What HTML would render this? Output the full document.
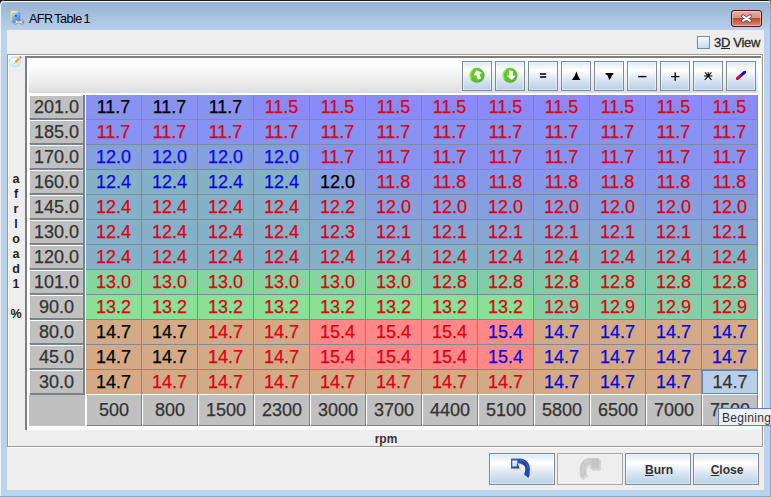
<!DOCTYPE html>
<html><head><meta charset="utf-8"><title>AFR Table 1</title>
<style>
*{box-sizing:border-box;margin:0;padding:0}
html,body{width:771px;height:497px;overflow:hidden}
body{background:#3ccbf0;position:relative;font-family:"Liberation Sans",Arial,sans-serif;color:#333}
div,span,svg{position:absolute}
#blk{left:0;top:0;width:771px;height:4px;background:linear-gradient(90deg,#1a1a1a 0,#1a1a1a 767px,#6a6a20 768px,#8a8a28 771px);border-bottom-right-radius:1px}
#win{left:0;top:0;width:770px;height:496px;background:#bbd2ec;border-radius:5px 3px 0 0;overflow:hidden}
#tb{left:0;top:0;width:770px;height:30px;background:linear-gradient(#9ab4d6 0px,#9db7d8 8px,#b9d0ea 30px)}
#tline{left:0;top:0;width:770px;height:1px;background:#1a1a1a}
#hl{left:0;top:1px;width:770px;height:495px;border-top:1px solid #fbfdff;border-left:1px solid #eef3fa;border-radius:5px 3px 0 0}
#title{left:29px;top:11px;font-size:12.6px;line-height:16px;color:#000;white-space:nowrap;letter-spacing:-.55px;word-spacing:-1px}
#content{left:7px;top:30px;width:757px;height:460px;background:#eee}
#close{left:731px;top:10px;width:31px;height:17px;border:1px solid #471520;border-radius:3px;background:linear-gradient(#e9b0a6 0,#dc8b7a 48%,#bf4a2c 50%,#d88872 100%);box-shadow:inset 0 0 0 1px rgba(255,220,210,.55)}
#cb{left:697px;top:36px;width:13px;height:13px;border:1px solid #7a8a99;background:linear-gradient(170deg,#fbfcfe 0,#e4ecf6 45%,#c6d6ea 100%)}
#cbl{left:714px;top:35px;font-size:13px;line-height:16px;color:#2a2a2a;white-space:nowrap;letter-spacing:-.3px;-webkit-text-stroke:.3px currentColor}
#panel{left:7px;top:54px;width:756px;height:393px;border:1px solid #9a9a9a;box-shadow:inset 1px 1px 0 #fff,1px 1px 0 #fff}
#cont{left:25px;top:56px;width:736px;height:374px;background:#fff;border-left:2px solid #7f7f7f;border-top:2px solid #7f7f7f}
#tool{left:29px;top:59px;width:729px;height:34px;background:linear-gradient(#fff 0,#fcfcfc 22%,#ededed 65%,#dedede 97%,#d8d8d8 100%)}
.tbtn{top:61px;width:30px;height:30px;border:1px solid #7a8a99;background:linear-gradient(#dde8f3 0,#fff 30%,#dde8f3 60%,#b8cfe5 100%);box-shadow:inset 0 0 0 1px rgba(255,255,255,.45)}
.tbtn svg{left:0;top:0}
.rh{left:29px;width:55px;height:24px;background:#c0c0c0;border-top:1px solid #fff;border-left:1px solid #fff;border-bottom:1px solid #808080;border-right:1px solid #808080;box-shadow:1px 1px 0 #76869a;font-size:18px;line-height:22px;text-align:center;color:#333}
.ch{top:394px;width:56px;height:32px;background:#c0c0c0;border-top:1px solid #fff;border-left:1px solid #fff;border-bottom:1px solid #808080;border-right:1px solid #808080;font-size:18px;line-height:30px;text-align:center;color:#333}
#rv{left:83px;top:95px;width:2px;height:300px;background:linear-gradient(90deg,#808080 0,#808080 1px,#76869a 1px,#76869a 2px)}
#corner{left:29px;top:395px;width:56px;height:31px;background:#c0c0c0}
.c{width:56px;height:25px;border-right:1px solid #7c8a9c;border-bottom:1px solid #7c8a9c;font-size:18px;line-height:25px;text-align:center}
.c,.rh,.ch{-webkit-text-stroke:.25px currentColor}
.k{color:#000}.r{color:#dc0012}.b{color:#0808dc}
.s{color:#333;background:#b8cfe5 !important;border:1px solid #6382bf;height:24px;line-height:22px}
#yl{left:9px;top:172px;width:14px;font-size:12.5px;font-weight:bold;line-height:15px;text-align:center;color:#222}
#yl span{position:static;display:block}
#xl{left:29px;top:432px;width:714px;text-align:center;font-size:12px;font-weight:bold;line-height:14px;color:#333}
.bbtn{top:453px;width:66px;height:32px;border:1px solid #7a8a99;box-shadow:inset 0 0 0 1px rgba(255,255,255,.45);background:linear-gradient(#dde8f3 0,#fff 30%,#dde8f3 60%,#b8cfe5 100%);font-size:12px;font-weight:bold;line-height:32px;padding-left:2px;text-align:center;color:#333}
.bbtn u{text-decoration:underline}
.dis{background:#eee;border-color:#a8a8a8;box-shadow:none}
#tip{left:718px;top:408px;width:60px;height:18px;border:1px solid #5f7fc0;background:#eff1f5;font-size:12px;line-height:18px;padding-left:3px;color:#333;white-space:nowrap;letter-spacing:.3px}
</style></head><body>
<div id="blk"></div>
<div id="win">
<div id="tb"></div><div id="tline"></div><div id="hl"></div>
<svg id="ticon" style="left:9px;top:9px" width="17" height="17" viewBox="0 0 17 17">
<defs><linearGradient id="ib" x1="0" y1="0" x2="1" y2="1"><stop offset="0" stop-color="#c4dcf8"/><stop offset=".5" stop-color="#6aa6ec"/><stop offset="1" stop-color="#3178dc"/></linearGradient>
<linearGradient id="iy" x1="0" y1="0" x2="1" y2="0"><stop offset="0" stop-color="#e6c25e"/><stop offset=".35" stop-color="#faedc0"/><stop offset="1" stop-color="#f0d890"/></linearGradient></defs>
<rect x="1" y="1.8" width="8" height="10.2" fill="url(#iy)"/>
<rect x="2.6" y="3.6" width="8.8" height="10.2" rx=".8" fill="url(#ib)"/>
<rect x="6" y="6" width="1.9" height="1.9" fill="#1e63c4"/>
<path d="M7.5 13h4.6" stroke="#808080" stroke-width="2.4"/>
<path d="M4.5 12.3A2.15 2.15 0 1 1 4.5 13.7L6.3 13.7L6.3 12.3Z" fill="#e2e2e2" stroke="#7a7a7a" stroke-width=".7"/>
<path d="M15.1 12.3A2.15 2.15 0 1 0 15.1 13.7L13.3 13.7L13.3 12.3Z" fill="#e2e2e2" stroke="#7a7a7a" stroke-width=".7"/>
<path d="M7.6 13h4.4" stroke="#e4e4e4" stroke-width="1.3"/>
</svg>
<div id="title">AFR Table 1</div>
<div id="close"><svg style="left:8px;top:2px" width="13" height="11" viewBox="0 0 13 11"><path d="M3.1 3.3l6.8 4.4M9.9 3.3l-6.8 4.4" stroke="#4a4a60" stroke-width="3.7" stroke-linecap="round"/><path d="M3.2 3.4l6.6 4.2M9.8 3.4l-6.6 4.2" stroke="#fff" stroke-width="2.3" stroke-linecap="round"/></svg></div>
<div id="content"></div>
<div id="cb"></div><div id="cbl">3<u>D</u> View</div>
<div id="panel"></div>
<svg id="bubble" style="left:8px;top:55px" width="16" height="14" viewBox="0 0 16 14">
<defs><radialGradient id="bg1" cx=".4" cy=".35" r=".7"><stop offset="0" stop-color="#f4fbff"/><stop offset="1" stop-color="#cfeaf8"/></radialGradient></defs>
<path d="M9.6 10.6l2 1.9-.2-2.8z" fill="#c4e4f3"/>
<ellipse cx="7" cy="6.7" rx="5.7" ry="4.7" fill="url(#bg1)" stroke="#b4dcee" stroke-width=".8"/>
<path d="M7.4 7.6L11 3.5" stroke="#f2a436" stroke-width="2.2"/>
<path d="M6.2 8.9l.5-1.5 1.1.9z" fill="#e8d8b0"/><path d="M6.1 9l.3-.7.5.4z" fill="#666"/>
<path d="M11.2 2.2l1.5 1.3.9-1.3-1.4-1.2z" fill="#ea5068"/>
</svg>
<div id="cont"></div>
<div id="tool"></div>
<div class="tbtn" style="left:462px"><svg width="28" height="28" viewBox="0 0 28 28"><defs><radialGradient id="gg" cx=".42" cy=".4" r=".62"><stop offset="0" stop-color="#66d02e"/><stop offset=".75" stop-color="#5cc427"/><stop offset="1" stop-color="#4aa81f"/></radialGradient></defs><circle cx="14.2" cy="13.5" r="7.9" fill="#8a8f98" opacity=".35"/><circle cx="14" cy="13.3" r="7.3" fill="url(#gg)"/><path d="M8.3 17a7 7 0 0 1 2-9.6" stroke="#b2ee66" stroke-width="1.1" fill="none" opacity=".9"/><g transform="translate(14.9 12.55) rotate(-18)"><path d="M0 -4.9L4.4 -.1L1.7 -.1L1.7 4.8L-1.7 4.8L-1.7 -.1L-4.4 -.1Z" fill="#fff"/></g></svg></div>
<div class="tbtn" style="left:495px"><svg width="28" height="28" viewBox="0 0 28 28"><defs><radialGradient id="gg2" cx=".42" cy=".4" r=".62"><stop offset="0" stop-color="#66d02e"/><stop offset=".75" stop-color="#5cc427"/><stop offset="1" stop-color="#4aa81f"/></radialGradient></defs><circle cx="14.2" cy="13.5" r="7.9" fill="#8a8f98" opacity=".35"/><circle cx="14" cy="13.3" r="7.3" fill="url(#gg2)"/><path d="M8.3 17a7 7 0 0 1 2-9.6" stroke="#b2ee66" stroke-width="1.1" fill="none" opacity=".9"/><path d="M13.1 8.2L17 9.3L17 13.65L19.7 13.7L15.8 18.1L10.7 13.5L13.1 13.55Z" fill="#fff"/></svg></div>
<div class="tbtn" style="left:528px"><svg width="28" height="28" viewBox="0 0 28 28"><path d="M11 12.1h6.2M11 15.05h6.2" stroke="#000" stroke-width="1.5"/></svg></div>
<div class="tbtn" style="left:561px"><svg width="28" height="28" viewBox="0 0 28 28"><path d="M14.45 9.6Q15.6 14 18.4 18L9.9 18Q13.2 14 14.45 9.6Z" fill="#000"/></svg></div>
<div class="tbtn" style="left:594px"><svg width="28" height="28" viewBox="0 0 28 28"><path d="M10.6 11L18.3 11L18.3 12.6L17.2 12.9Q16 16 14.3 18.1Q13.4 15 12.3 12.9L10.6 12.6Z" fill="#000"/></svg></div>
<div class="tbtn" style="left:627px"><svg width="28" height="28" viewBox="0 0 28 28"><path d="M10.2 14.6h8.2" stroke="#000" stroke-width="1.4"/></svg></div>
<div class="tbtn" style="left:660px"><svg width="28" height="28" viewBox="0 0 28 28"><path d="M10 14.6h8.4M14.2 10.6v8.2" stroke="#000" stroke-width="1.4"/></svg></div>
<div class="tbtn" style="left:693px"><svg width="28" height="28" viewBox="0 0 28 28"><path d="M10 13.9h8.3M14.2 10v4M11 10.4l6.4 7.4M17.4 10.4l-6.6 7.4" stroke="#000" stroke-width="1.05"/></svg></div>
<div class="tbtn" style="left:726px"><svg width="28" height="28" viewBox="0 0 28 28"><defs><linearGradient id="pg" gradientUnits="userSpaceOnUse" x1="9" y1="18" x2="19" y2="9"><stop offset="0" stop-color="#ff0000"/><stop offset=".22" stop-color="#f00014"/><stop offset=".4" stop-color="#a80068"/><stop offset=".6" stop-color="#4010c0"/><stop offset=".75" stop-color="#0800f4"/><stop offset="1" stop-color="#0000ff"/></linearGradient></defs><path d="M10.5 16.4L17.5 10.3" stroke="url(#pg)" stroke-width="3.1" stroke-linecap="round"/><path d="M16.6 9.1L18.9 9L18.9 11.2Z" fill="#0000ff"/><path d="M9 15.6L9 17.8L11.2 17.8Z" fill="#ff0000"/></svg></div>
<div class="rh" style="top:95px">201.0</div>
<div class="rh" style="top:120px">185.0</div>
<div class="rh" style="top:145px">170.0</div>
<div class="rh" style="top:170px">160.0</div>
<div class="rh" style="top:195px">145.0</div>
<div class="rh" style="top:220px">130.0</div>
<div class="rh" style="top:245px">120.0</div>
<div class="rh" style="top:270px">101.0</div>
<div class="rh" style="top:295px">90.0</div>
<div class="rh" style="top:320px">80.0</div>
<div class="rh" style="top:345px">45.0</div>
<div class="rh" style="top:370px">30.0</div>
<div class="c k" style="left:86px;top:95px;background:#8892f0">11.7</div>
<div class="c k" style="left:142px;top:95px;background:#8892f0">11.7</div>
<div class="c k" style="left:198px;top:95px;background:#8892f0">11.7</div>
<div class="c r" style="left:254px;top:95px;background:#8a8afa">11.5</div>
<div class="c r" style="left:310px;top:95px;background:#8a8afa">11.5</div>
<div class="c r" style="left:366px;top:95px;background:#8a8afa">11.5</div>
<div class="c r" style="left:422px;top:95px;background:#8a8afa">11.5</div>
<div class="c r" style="left:478px;top:95px;background:#8a8afa">11.5</div>
<div class="c r" style="left:534px;top:95px;background:#8a8afa">11.5</div>
<div class="c r" style="left:590px;top:95px;background:#8a8afa">11.5</div>
<div class="c r" style="left:646px;top:95px;background:#8a8afa">11.5</div>
<div class="c r" style="left:702px;top:95px;background:#8a8afa">11.5</div>
<div class="c r" style="left:86px;top:120px;background:#8892f0">11.7</div>
<div class="c r" style="left:142px;top:120px;background:#8892f0">11.7</div>
<div class="c r" style="left:198px;top:120px;background:#8892f0">11.7</div>
<div class="c r" style="left:254px;top:120px;background:#8892f0">11.7</div>
<div class="c r" style="left:310px;top:120px;background:#8892f0">11.7</div>
<div class="c r" style="left:366px;top:120px;background:#8892f0">11.7</div>
<div class="c r" style="left:422px;top:120px;background:#8892f0">11.7</div>
<div class="c r" style="left:478px;top:120px;background:#8892f0">11.7</div>
<div class="c r" style="left:534px;top:120px;background:#8892f0">11.7</div>
<div class="c r" style="left:590px;top:120px;background:#8892f0">11.7</div>
<div class="c r" style="left:646px;top:120px;background:#8892f0">11.7</div>
<div class="c r" style="left:702px;top:120px;background:#8892f0">11.7</div>
<div class="c b" style="left:86px;top:145px;background:#86a0de">12.0</div>
<div class="c b" style="left:142px;top:145px;background:#86a0de">12.0</div>
<div class="c b" style="left:198px;top:145px;background:#86a0de">12.0</div>
<div class="c b" style="left:254px;top:145px;background:#86a0de">12.0</div>
<div class="c r" style="left:310px;top:145px;background:#8892f0">11.7</div>
<div class="c r" style="left:366px;top:145px;background:#8892f0">11.7</div>
<div class="c r" style="left:422px;top:145px;background:#8892f0">11.7</div>
<div class="c r" style="left:478px;top:145px;background:#8892f0">11.7</div>
<div class="c r" style="left:534px;top:145px;background:#8892f0">11.7</div>
<div class="c r" style="left:590px;top:145px;background:#8892f0">11.7</div>
<div class="c r" style="left:646px;top:145px;background:#8892f0">11.7</div>
<div class="c r" style="left:702px;top:145px;background:#8892f0">11.7</div>
<div class="c b" style="left:86px;top:170px;background:#84b0c8">12.4</div>
<div class="c b" style="left:142px;top:170px;background:#84b0c8">12.4</div>
<div class="c b" style="left:198px;top:170px;background:#84b0c8">12.4</div>
<div class="c b" style="left:254px;top:170px;background:#84b0c8">12.4</div>
<div class="c k" style="left:310px;top:170px;background:#86a0de">12.0</div>
<div class="c r" style="left:366px;top:170px;background:#8898e8">11.8</div>
<div class="c r" style="left:422px;top:170px;background:#8898e8">11.8</div>
<div class="c r" style="left:478px;top:170px;background:#8898e8">11.8</div>
<div class="c r" style="left:534px;top:170px;background:#8898e8">11.8</div>
<div class="c r" style="left:590px;top:170px;background:#8898e8">11.8</div>
<div class="c r" style="left:646px;top:170px;background:#8898e8">11.8</div>
<div class="c r" style="left:702px;top:170px;background:#8898e8">11.8</div>
<div class="c r" style="left:86px;top:195px;background:#84b0c8">12.4</div>
<div class="c r" style="left:142px;top:195px;background:#84b0c8">12.4</div>
<div class="c r" style="left:198px;top:195px;background:#84b0c8">12.4</div>
<div class="c r" style="left:254px;top:195px;background:#84b0c8">12.4</div>
<div class="c r" style="left:310px;top:195px;background:#84a8d2">12.2</div>
<div class="c r" style="left:366px;top:195px;background:#86a0de">12.0</div>
<div class="c r" style="left:422px;top:195px;background:#86a0de">12.0</div>
<div class="c r" style="left:478px;top:195px;background:#86a0de">12.0</div>
<div class="c r" style="left:534px;top:195px;background:#86a0de">12.0</div>
<div class="c r" style="left:590px;top:195px;background:#86a0de">12.0</div>
<div class="c r" style="left:646px;top:195px;background:#86a0de">12.0</div>
<div class="c r" style="left:702px;top:195px;background:#86a0de">12.0</div>
<div class="c r" style="left:86px;top:220px;background:#84b0c8">12.4</div>
<div class="c r" style="left:142px;top:220px;background:#84b0c8">12.4</div>
<div class="c r" style="left:198px;top:220px;background:#84b0c8">12.4</div>
<div class="c r" style="left:254px;top:220px;background:#84b0c8">12.4</div>
<div class="c r" style="left:310px;top:220px;background:#84acce">12.3</div>
<div class="c r" style="left:366px;top:220px;background:#86a6d6">12.1</div>
<div class="c r" style="left:422px;top:220px;background:#86a6d6">12.1</div>
<div class="c r" style="left:478px;top:220px;background:#86a6d6">12.1</div>
<div class="c r" style="left:534px;top:220px;background:#86a6d6">12.1</div>
<div class="c r" style="left:590px;top:220px;background:#86a6d6">12.1</div>
<div class="c r" style="left:646px;top:220px;background:#86a6d6">12.1</div>
<div class="c r" style="left:702px;top:220px;background:#86a6d6">12.1</div>
<div class="c r" style="left:86px;top:245px;background:#84b0c8">12.4</div>
<div class="c r" style="left:142px;top:245px;background:#84b0c8">12.4</div>
<div class="c r" style="left:198px;top:245px;background:#84b0c8">12.4</div>
<div class="c r" style="left:254px;top:245px;background:#84b0c8">12.4</div>
<div class="c r" style="left:310px;top:245px;background:#84b0c8">12.4</div>
<div class="c r" style="left:366px;top:245px;background:#84b0c8">12.4</div>
<div class="c r" style="left:422px;top:245px;background:#84b0c8">12.4</div>
<div class="c r" style="left:478px;top:245px;background:#84b0c8">12.4</div>
<div class="c r" style="left:534px;top:245px;background:#84b0c8">12.4</div>
<div class="c r" style="left:590px;top:245px;background:#84b0c8">12.4</div>
<div class="c r" style="left:646px;top:245px;background:#84b0c8">12.4</div>
<div class="c r" style="left:702px;top:245px;background:#84b0c8">12.4</div>
<div class="c r" style="left:86px;top:270px;background:#86d4a0">13.0</div>
<div class="c r" style="left:142px;top:270px;background:#86d4a0">13.0</div>
<div class="c r" style="left:198px;top:270px;background:#86d4a0">13.0</div>
<div class="c r" style="left:254px;top:270px;background:#86d4a0">13.0</div>
<div class="c r" style="left:310px;top:270px;background:#86d4a0">13.0</div>
<div class="c r" style="left:366px;top:270px;background:#86d4a0">13.0</div>
<div class="c r" style="left:422px;top:270px;background:#84cca8">12.8</div>
<div class="c r" style="left:478px;top:270px;background:#84cca8">12.8</div>
<div class="c r" style="left:534px;top:270px;background:#84cca8">12.8</div>
<div class="c r" style="left:590px;top:270px;background:#84cca8">12.8</div>
<div class="c r" style="left:646px;top:270px;background:#84cca8">12.8</div>
<div class="c r" style="left:702px;top:270px;background:#84cca8">12.8</div>
<div class="c r" style="left:86px;top:295px;background:#8ae096">13.2</div>
<div class="c r" style="left:142px;top:295px;background:#8ae096">13.2</div>
<div class="c r" style="left:198px;top:295px;background:#8ae096">13.2</div>
<div class="c r" style="left:254px;top:295px;background:#8ae096">13.2</div>
<div class="c r" style="left:310px;top:295px;background:#8ae096">13.2</div>
<div class="c r" style="left:366px;top:295px;background:#8ae096">13.2</div>
<div class="c r" style="left:422px;top:295px;background:#8ae096">13.2</div>
<div class="c r" style="left:478px;top:295px;background:#8ae096">13.2</div>
<div class="c r" style="left:534px;top:295px;background:#86cea4">12.9</div>
<div class="c r" style="left:590px;top:295px;background:#86cea4">12.9</div>
<div class="c r" style="left:646px;top:295px;background:#86cea4">12.9</div>
<div class="c r" style="left:702px;top:295px;background:#86cea4">12.9</div>
<div class="c k" style="left:86px;top:320px;background:#d4aa86">14.7</div>
<div class="c k" style="left:142px;top:320px;background:#d4aa86">14.7</div>
<div class="c r" style="left:198px;top:320px;background:#d4aa86">14.7</div>
<div class="c r" style="left:254px;top:320px;background:#d4aa86">14.7</div>
<div class="c r" style="left:310px;top:320px;background:#ff8888">15.4</div>
<div class="c r" style="left:366px;top:320px;background:#ff8888">15.4</div>
<div class="c r" style="left:422px;top:320px;background:#ff8888">15.4</div>
<div class="c b" style="left:478px;top:320px;background:#ff8888">15.4</div>
<div class="c b" style="left:534px;top:320px;background:#d4aa86">14.7</div>
<div class="c b" style="left:590px;top:320px;background:#d4aa86">14.7</div>
<div class="c b" style="left:646px;top:320px;background:#d4aa86">14.7</div>
<div class="c b" style="left:702px;top:320px;background:#d4aa86">14.7</div>
<div class="c k" style="left:86px;top:345px;background:#d4aa86">14.7</div>
<div class="c k" style="left:142px;top:345px;background:#d4aa86">14.7</div>
<div class="c r" style="left:198px;top:345px;background:#d4aa86">14.7</div>
<div class="c r" style="left:254px;top:345px;background:#d4aa86">14.7</div>
<div class="c r" style="left:310px;top:345px;background:#ff8888">15.4</div>
<div class="c r" style="left:366px;top:345px;background:#ff8888">15.4</div>
<div class="c r" style="left:422px;top:345px;background:#ff8888">15.4</div>
<div class="c b" style="left:478px;top:345px;background:#ff8888">15.4</div>
<div class="c b" style="left:534px;top:345px;background:#d4aa86">14.7</div>
<div class="c b" style="left:590px;top:345px;background:#d4aa86">14.7</div>
<div class="c b" style="left:646px;top:345px;background:#d4aa86">14.7</div>
<div class="c b" style="left:702px;top:345px;background:#d4aa86">14.7</div>
<div class="c k" style="left:86px;top:370px;background:#d4aa86">14.7</div>
<div class="c r" style="left:142px;top:370px;background:#d4aa86">14.7</div>
<div class="c r" style="left:198px;top:370px;background:#d4aa86">14.7</div>
<div class="c r" style="left:254px;top:370px;background:#d4aa86">14.7</div>
<div class="c r" style="left:310px;top:370px;background:#d4aa86">14.7</div>
<div class="c r" style="left:366px;top:370px;background:#d4aa86">14.7</div>
<div class="c r" style="left:422px;top:370px;background:#d4aa86">14.7</div>
<div class="c r" style="left:478px;top:370px;background:#d4aa86">14.7</div>
<div class="c b" style="left:534px;top:370px;background:#d4aa86">14.7</div>
<div class="c b" style="left:590px;top:370px;background:#d4aa86">14.7</div>
<div class="c b" style="left:646px;top:370px;background:#d4aa86">14.7</div>
<div class="c s" style="left:702px;top:370px;background:#d4aa86">14.7</div>
<div class="ch" style="left:86px">500</div>
<div class="ch" style="left:142px">800</div>
<div class="ch" style="left:198px">1500</div>
<div class="ch" style="left:254px">2300</div>
<div class="ch" style="left:310px">3000</div>
<div class="ch" style="left:366px">3700</div>
<div class="ch" style="left:422px">4400</div>
<div class="ch" style="left:478px">5100</div>
<div class="ch" style="left:534px">5800</div>
<div class="ch" style="left:590px">6500</div>
<div class="ch" style="left:646px">7000</div>
<div class="ch" style="left:702px">7500</div>
<div id="rv"></div>
<div id="corner"></div>
<div id="yl"><span>a</span><span>f</span><span>r</span><span>l</span><span>o</span><span>a</span><span>d</span><span>1</span><span>&nbsp;</span><span>%</span></div>
<div id="xl">rpm</div>
<div class="bbtn" style="left:489px"><svg style="left:0;top:0" width="64" height="30" viewBox="0 0 64 30"><defs><linearGradient id="ug" x1="0" y1="0" x2="1" y2="1"><stop offset="0" stop-color="#3c66c8"/><stop offset=".5" stop-color="#1c3fa0"/><stop offset="1" stop-color="#2a52b4"/></linearGradient><linearGradient id="uw" x1="0" y1="0" x2="1" y2="1"><stop offset="0" stop-color="#fff"/><stop offset="1" stop-color="#b8c8f4"/></linearGradient></defs><path d="M21 4.6L30 4.4C36 4.6 39.8 9 39.8 15L39.6 21.5L38.4 24L34 20.6C35.5 17 36 13.5 34 11.5C32.5 9.8 30.5 9.4 27.8 9.3L29.5 14.6L21 14.6Z" fill="#e8dfc8" stroke="#e8dfc8" stroke-width=".8" transform="translate(1.9 1.8)"/><path d="M21 4.6L30 4.4C36 4.6 39.8 9 39.8 15L39.6 21.5L38.4 24L34 20.6C35.5 17 36 13.5 34 11.5C32.5 9.8 30.5 9.4 27.8 9.3L29.5 14.6L21 14.6Z" fill="url(#ug)"/><path d="M22.4 6.4L27.4 6.4L27.4 9.6L26.6 12.6L22.4 12.6Z" fill="url(#uw)"/><path d="M30 6C34.5 6.3 37.6 9.5 38 14" stroke="#5c84dc" stroke-width="1" fill="none" opacity=".7"/></svg></div>
<div class="bbtn dis" style="left:557px"><svg style="left:0;top:0" width="64" height="30" viewBox="0 0 64 30"><g transform="translate(62 0) scale(-1 1)"><path d="M21 4.6L30 4.4C36 4.6 39.8 9 39.8 15L39.6 21.5L38.4 24L34 20.6C35.5 17 36 13.5 34 11.5C32.5 9.8 30.5 9.4 27.8 9.3L29.5 14.6L21 14.6Z" fill="#d6d6d6" stroke="#d6d6d6" stroke-width="1" transform="translate(-1.6 1.6)"/><path d="M21 4.6L30 4.4C36 4.6 39.8 9 39.8 15L39.6 21.5L38.4 24L34 20.6C35.5 17 36 13.5 34 11.5C32.5 9.8 30.5 9.4 27.8 9.3L29.5 14.6L21 14.6Z" fill="#c6c6c6" stroke="#c9c9c9" stroke-width=".8"/><path d="M30 6.6C34 7 37 10 37.4 15L37 20" stroke="#d2d2d2" stroke-width="1.6" fill="none"/></g></svg></div>
<div class="bbtn" style="left:625px"><u>B</u>urn</div>
<div class="bbtn" style="left:693px"><u>C</u>lose</div>
</div>
<div id="tip">Begining</div>
</body></html>
